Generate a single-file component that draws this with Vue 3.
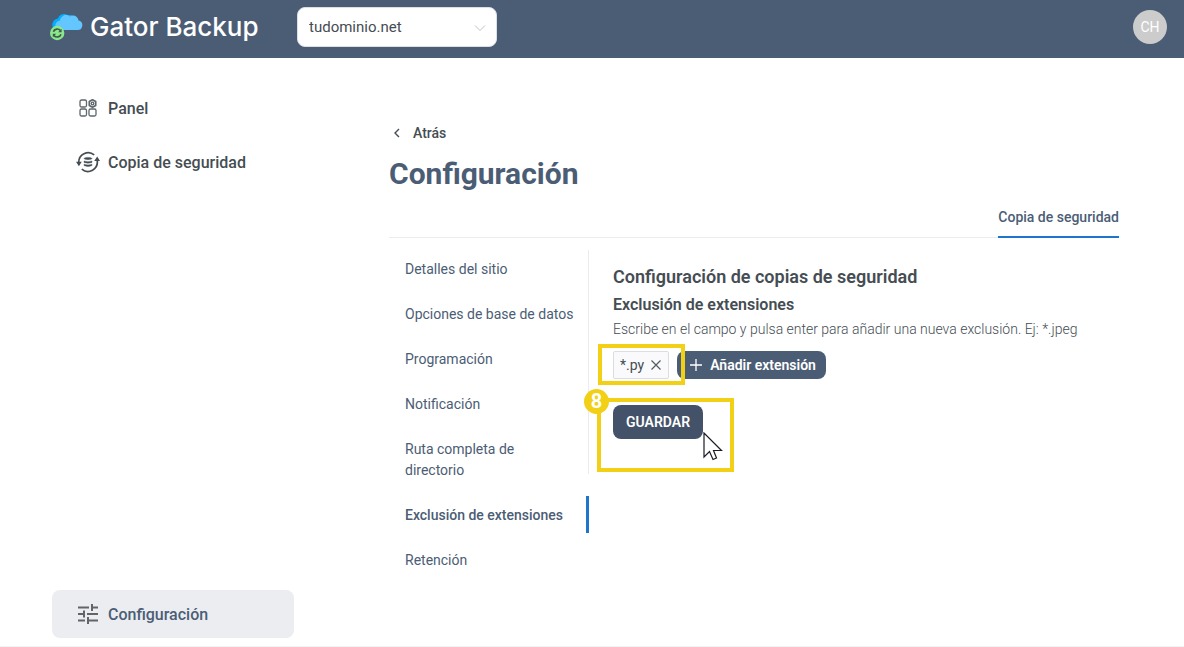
<script setup>
import { ref } from 'vue'

const domain = ref('tudominio.net')
const sections = [
  'Detalles del sitio',
  'Opciones de base de datos',
  'Programación',
  'Notificación',
  'Ruta completa de\ndirectorio',
  'Exclusión de extensiones',
  'Retención',
]
const current = ref('Exclusión de extensiones')
const extensions = ref(['*.py'])

function removeExtension(ext) {
  extensions.value = extensions.value.filter((e) => e !== ext)
}
</script>

<template>
  <div class="page">
    <header class="topbar">
      <a class="brand" href="#">
        <svg class="brand-icon" width="34" height="28" viewBox="0 0 34 28" aria-hidden="true">
          <path d="M3 15C1 10 4 6 8 5.500C9 1 15-.5 18 2.500C22 1 25 4 25 7L20 16H4Z" fill="#00adff" />
          <path d="M9 17C3 15 5 8 10 7.500C11 2 17 .5 20 3.500C24 1 28 4 28.500 7.500C32 8 33.500 12 31.500 15C31 16.300 30 17 28 17Z" fill="#63c6ff" />
          <circle cx="7.200" cy="20" r="7.200" fill="#8be88b" />
          <path d="M3.400 18.800A4 4 0 0 1 10.400 17.600M11 21.200A4 4 0 0 1 4 22.400" fill="none" stroke="#3d5948" stroke-width="1.700" />
          <path d="M11.600 15.800V19.200H8.200ZM2.800 24.200V20.800H6.200Z" fill="#3d5948" />
        </svg>
        <span>Gator Backup</span>
      </a>
      <div class="domain">
        <select v-model="domain" aria-label="Dominio">
          <option>tudominio.net</option>
        </select>
        <svg class="chevron" width="12" height="8" viewBox="0 0 12 8" aria-hidden="true">
          <path d="M1 1.500L6 6.500L11 1.500" fill="none" stroke="#bfc1c5" />
        </svg>
      </div>
      <button class="avatar" type="button" aria-label="Cuenta CH">CH</button>
    </header>

    <div class="body">
      <nav class="sidebar" aria-label="Principal">
        <a class="side-link" href="#">
          <svg width="24" height="24" viewBox="0 0 24 24" fill="none" stroke="#5f666c" stroke-width="1.300" aria-hidden="true">
            <rect x="4" y="4" width="6.500" height="7" rx="1.500" />
            <rect x="4" y="13" width="6.500" height="7" rx="1.500" />
            <rect x="13" y="13" width="7" height="7" rx="1.500" />
            <path d="M16.500 3.800L19.700 5.600V9.400L16.500 11.200L13.300 9.400V5.600Z" stroke-width="1.700" stroke-linejoin="round" />
            <circle cx="16.500" cy="7.500" r="1.300" />
          </svg>
          <span>Panel</span>
        </a>
        <a class="side-link" href="#">
          <svg width="24" height="24" viewBox="0 0 24 24" aria-hidden="true">
            <g fill="none" stroke="#454d53" stroke-width="1.700">
              <path d="M18.200 4.900A9.400 9.400 0 0 0 2.800 12.500M5.800 19.100A9.400 9.400 0 0 0 21.200 10.500" />
            </g>
            <path d="M0 11.800H5.800L2.900 16.200ZM18.200 11L21.200 6.500L24 11Z" fill="#454d53" />
            <path d="M8 8.500C8 7 16 7 16 8.500C16 10 8 10 8 8.500ZM8 11Q12 12.400 16 11V12.400Q12 14 8 12.400ZM8 14.200Q12 15.600 16 14.200V15.600Q12 17.600 8 15.600Z" fill="#454d53" stroke="#454d53" stroke-width=".4" />
          </svg>
          <span>Copia de seguridad</span>
        </a>
        <a class="side-link selected" href="#" aria-current="page">
          <svg width="24" height="24" viewBox="0 0 24 24" fill="none" stroke="#626468" stroke-width="2" aria-hidden="true">
            <path d="M2 5.500H13M16 5.500H22M16 2V9M2 12H8M8 8.500V15.500M11 12H22M2 18.500H9M12 18.500H22M12 15V22" />
          </svg>
          <span>Configuración</span>
        </a>
      </nav>

      <main class="main">
        <a class="back" href="#">
          <svg width="16" height="16" viewBox="0 0 16 16" aria-hidden="true">
            <path d="M10 4L6 8L10 12" fill="none" stroke="#454d53" stroke-width="1.400" />
          </svg>
          <span>Atrás</span>
        </a>
        <h1>Configuración</h1>
        <div class="tabs" role="tablist">
          <button class="tab" type="button" role="tab" aria-selected="true">Copia de seguridad</button>
        </div>

        <div class="panel">
          <nav class="sections" aria-label="Secciones">
            <a
              v-for="name in sections"
              :key="name"
              href="#"
              :class="{ active: name === current }"
              @click.prevent="current = name"
            >{{ name }}</a>
          </nav>

          <section class="content">
            <h2>Configuración de copias de seguridad</h2>
            <h3>Exclusión de extensiones</h3>
            <p>Escribe en el campo y pulsa enter para añadir una nueva exclusión. Ej: *.jpeg</p>
            <div class="extensions">
              <div v-for="ext in extensions" :key="ext" class="tag">
                <span>{{ ext }}</span>
                <button type="button" :aria-label="'Quitar ' + ext" @click="removeExtension(ext)">
                  <svg width="12" height="12" viewBox="0 0 12 12" aria-hidden="true">
                    <path d="M1.500 1.500L10.500 10.500M10.500 1.500L1.500 10.500" stroke="#555b60" stroke-width="1.200" />
                  </svg>
                </button>
              </div>
              <button class="add" type="button">
                <svg width="12" height="12" viewBox="0 0 12 12" aria-hidden="true">
                  <path d="M6 0V12M0 6H12" stroke="#fff" stroke-width="1.300" />
                </svg>
                <span>Añadir extensión</span>
              </button>
              <div class="mark mark-tag"></div>
            </div>
            <div class="actions">
              <button class="save" type="button">GUARDAR</button>
              <div class="mark mark-save"></div>
              <span class="step">8</span>
              <svg class="cursor" width="20" height="30" viewBox="0 0 20 30" aria-hidden="true">
                <path d="M1 1V25L6.500 19.500L10 27.500L13.500 26L10.500 18.500H18.500Z" fill="#fff" stroke="#1c1c28" stroke-width="1.200" />
              </svg>
            </div>
          </section>
        </div>
      </main>
    </div>
  </div>
</template>

<style>
body {
  margin: 0;
  background: #fff;
}
</style>

<style scoped>
.page {
  box-sizing: border-box;
  display: flex;
  flex-direction: column;
  min-height: 100vh;
  border-bottom: 1px solid #f3f3f4;
  color: #454d53;
  font-family: Roboto, "Liberation Sans", sans-serif;
  font-size: 14px;
}
a {
  color: inherit;
  text-decoration: none;
}
button,
select {
  margin: 0;
  padding: 0;
  border: 0;
  background: none;
  color: inherit;
  font: inherit;
  cursor: pointer;
}
h1,
h2,
h3,
p {
  margin: 0;
}
svg {
  display: block;
  flex: none;
}

.topbar {
  box-sizing: border-box;
  display: flex;
  align-items: center;
  height: 58px;
  padding: 0 17px 4px 50px;
  background: #4b5d75;
}
.brand {
  display: flex;
  align-items: center;
  gap: 6px;
  width: 247px;
  color: #fff;
  font-family: Inter, sans-serif;
  font-size: 26px;
  font-weight: 500;
  line-height: 32px;
  white-space: nowrap;
}
.domain {
  position: relative;
  width: 200px;
}
.domain select {
  display: block;
  appearance: none;
  box-sizing: border-box;
  width: 100%;
  height: 40px;
  padding: 0 32px 0 11px;
  border: 1px solid #dcdfe6;
  border-radius: 8px;
  background: #fff;
  font-size: 15px;
}
.chevron {
  position: absolute;
  top: 17px;
  right: 11px;
  pointer-events: none;
}
.avatar {
  width: 34px;
  height: 34px;
  margin-left: auto;
  border-radius: 50%;
  background: #ccc;
  color: #fff;
}

.body {
  display: flex;
  flex: 1;
}
.sidebar {
  display: flex;
  flex: none;
  flex-direction: column;
  gap: 6px;
  box-sizing: border-box;
  width: 294px;
  padding: 26px 0 8px 52px;
}
.side-link {
  display: flex;
  align-items: center;
  gap: 8px;
  height: 48px;
  padding: 0 24px;
  border-radius: 8px;
  font-size: 16px;
  font-weight: 500;
}
.side-link.selected {
  margin-top: auto;
  background: #ecedf1;
  color: #4b5d75;
}

.main {
  flex: 1;
  min-width: 0;
  padding: 65px 65px 0 95px;
}
.back {
  display: flex;
  align-items: center;
  gap: 8px;
  width: max-content;
  height: 20px;
  font-weight: 500;
}
h1 {
  margin-top: 12px;
  color: #4b5d75;
  font-size: 30px;
  font-weight: 700;
  line-height: 38px;
}
.tabs {
  display: flex;
  justify-content: flex-end;
  margin-top: 5px;
  box-shadow: inset 0 -1px #ebecef;
}
.tab {
  height: 40px;
  border-bottom: 2px solid #1f75cb;
  color: #4b5d75;
  font-weight: 500;
}

.panel {
  display: flex;
  align-items: flex-start;
  margin-top: 12px;
}
.sections {
  z-index: 1;
  display: flex;
  flex: none;
  flex-direction: column;
  gap: 8px;
  width: 200px;
  margin-right: -1px;
  color: #4b5d75;
  line-height: 21px;
}
.sections a {
  padding: 9px 8px 7px 16px;
  white-space: pre-line;
}
.sections .active {
  border-right: 3px solid #1f75cb;
  padding-right: 5px;
  font-weight: 500;
}
.content {
  flex: 1;
  min-width: 0;
  padding: 14px 0 35px 24px;
  border-left: 1px solid #ebecf2;
}
h2 {
  font-size: 18px;
  font-weight: 600;
  line-height: 26px;
}
h3 {
  margin-top: 3px;
  font-size: 16px;
  font-weight: 600;
  line-height: 24px;
}
.content p {
  font-size: 14px;
  font-weight: 300;
  line-height: 24px;
}
.extensions {
  position: relative;
  display: flex;
  gap: 8px;
  margin-top: 10px;
}
.tag {
  display: flex;
  align-items: center;
  gap: 6px;
  box-sizing: border-box;
  height: 28px;
  padding: 0 6px;
  border: 1px solid #dcdde2;
  border-radius: 2px;
  background: #fafafc;
}
.add {
  display: flex;
  align-items: center;
  gap: 8px;
  height: 28px;
  padding: 0 10px 0 13px;
  border-radius: 8px;
  background: #4b5d75;
  color: #fff;
  font-weight: 600;
}
.actions {
  position: relative;
  margin-top: 26px;
}
.save {
  display: block;
  height: 34px;
  padding: 0 13px;
  border-radius: 8px;
  background: #435269;
  color: #fff;
  font-weight: 600;
}
.mark {
  position: absolute;
  box-sizing: border-box;
  border: 4px solid #f2d016;
  pointer-events: none;
}
.mark-tag {
  top: -7px;
  left: -15px;
  width: 87px;
  height: 41px;
}
.mark-save {
  top: -7px;
  left: -16px;
  width: 137px;
  height: 74px;
}
.step {
  position: absolute;
  top: -16px;
  left: -29px;
  width: 25px;
  height: 25px;
  border-radius: 50%;
  background: #f2d016;
  color: #fff;
  font-size: 20px;
  font-weight: 700;
  line-height: 25px;
  text-align: center;
}
.cursor {
  position: absolute;
  top: 27px;
  left: 90px;
}
</style>
